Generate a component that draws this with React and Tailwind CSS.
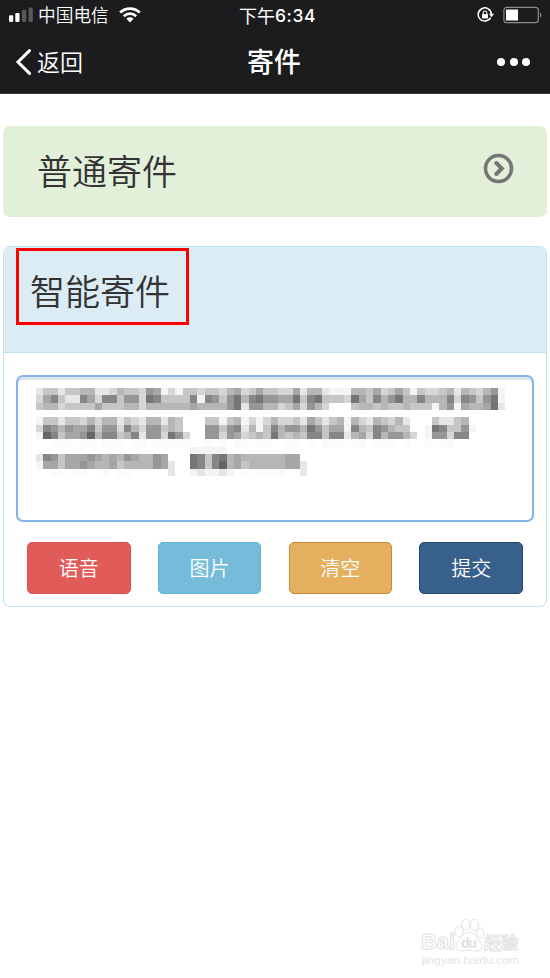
const CELL = 22 / 3;

// one character per block: hex grey level, g = barely visible, . = empty
const mosaic = [
  'ecceccbbeedbccd9afdfccdccdbadcaccddaebbefffbbcadcacfcddcbebcdb9f',
  'da8cee8ad88c99d78cccc8f89c97b8799aa7c87cccd7ac8b97bb8bbb8d89c97f',
  'cbbdccccacccbbdbbbbbbabbbb97e99bbdcad9bd...cbbcbccbcccfb9fabba7e',
  '',
  'fcceccdbdbbecdebbebc...ccfcbfdfdbddceacecbfbdebcdbe...ceecb',
  'd89b9aa8c99d8bd99cbc...99c98ebfc8b99b79caaf8bc89bcc..f78cc9f',
  'f68caa96b88cb8e99d79d..99d9adcbc7bcbc88c88ebad8b99bd.f99d88',
  '..ggg.gg.ggg.gg.ggggg..g.g.gg.gg..gg.g.ggg.gg.ggg.g..g.gg',
  '.....................fffff',
  'e89caaa9abab9abb9a...78c87babbbbbbaa',
  'faacaa9abbacbbbb9ae..78c86bacbbbbbaae',
  '..gg.gg..g.gg.....e..feffef.g.gggg..e',
];

function Mosaic() {
  return (
    <svg width="475" height="90" className="block" shapeRendering="crispEdges" aria-hidden="true">
      {mosaic.flatMap((row, y) =>
        [...row].map((c, x) => {
          if (c === '.') return null;
          const v = c === 'g' ? 251 : c === 'f' ? 244 : parseInt(c, 16) * 16 + 6;
          return <rect key={`${x}-${y}`} x={x * CELL} y={y * CELL} width={CELL} height={CELL} fill={`rgb(${v},${v},${v})`} />;
        })
      )}
    </svg>
  );
}

function StatusBar() {
  return (
    <div className="flex h-[30px] items-center text-white">
      <div className="flex flex-1 items-center pl-[9px]">
        <svg width="25" height="16" viewBox="0 0 25 16" fill="#fff">
          <rect x="0" y="8.3" width="4.2" height="6.7" rx="1.2" />
          <rect x="6.3" y="6" width="4.2" height="9" rx="1.2" />
          <rect x="13" y="3" width="4.2" height="12" rx="1.2" fill="#58585b" />
          <rect x="19.6" y="0.5" width="4.2" height="14.5" rx="1.2" fill="#58585b" />
        </svg>
        <span className="ml-[4px] text-[17.7px] font-[350] leading-none">中国电信</span>
        <svg className="ml-[10px]" width="22" height="16" viewBox="0 0 22 16" fill="none" stroke="#fff" strokeWidth="2.8">
          <path d="M1.2 5.6a14 14 0 0 1 19.6 0" />
          <path d="M4.8 9.2a9 9 0 0 1 12.4 0" />
          <path d="M11 15.4 7.4 11.8a5.2 5.2 0 0 1 7.2 0z" fill="#fff" stroke="none" />
        </svg>
      </div>
      <div className="flex items-center pl-[3px] text-[18px] leading-none">
        下午<span className="pt-px font-['Inter'] text-[17.5px] font-medium tracking-[0.6px]">6:34</span>
      </div>
      <div className="flex flex-1 items-center justify-end pr-[7px]">
        <svg width="18" height="16" viewBox="0 0 18 16" fill="none" stroke="#fff" strokeWidth="1.5">
          <path d="M13.6 10.7A6.6 6.6 0 1 1 14.4 7" />
          <path d="M12 6.8h5l-2.5 3.4z" fill="#fff" stroke="none" />
          <rect x="5" y="7" width="6" height="4.4" rx=".6" fill="#fff" stroke="none" />
          <path d="M6.2 7.4V5.8a1.8 1.8 0 0 1 3.6 0v1.6" strokeWidth="1.1" />
        </svg>
        <svg className="ml-[8px]" width="40" height="18" viewBox="0 0 40 18">
          <rect x=".9" y="1.3" width="34.4" height="15.4" rx="3" fill="none" stroke="#8a8a8c" strokeWidth="1.2" />
          <rect x="3" y="3.5" width="12" height="11" fill="#fff" />
          <path d="M37 6.5c1.8.5 1.8 4.5 0 5z" fill="#8a8a8c" />
        </svg>
      </div>
    </div>
  );
}

function NavBar() {
  return (
    <div className="flex h-[63px] items-center text-white">
      <div className="flex flex-1 items-center pl-[15px]">
        <svg width="17" height="26" viewBox="0 0 17 26" fill="none" stroke="#fff" strokeWidth="3" strokeLinecap="round">
          <path d="M14.5 1.6 3 13l11.5 11.4" />
        </svg>
        <span className="-mt-px ml-[5px] text-[23px] font-[350] leading-none">返回</span>
      </div>
      <h1 className="-mt-[3px] pl-[3px] text-[27px] font-medium leading-none">寄件</h1>
      <div className="flex flex-1 justify-end gap-[4.5px] pr-[20px]">
        <span className="size-[8px] rounded-full bg-white"></span>
        <span className="size-[8px] rounded-full bg-white"></span>
        <span className="size-[8px] rounded-full bg-white"></span>
      </div>
    </div>
  );
}

const buttons = [
  { label: '语音', color: 'bg-[#e15b59] border-[#dd504e]' },
  { label: '图片', color: 'bg-[#76bbda] border-[#5fb2d4]' },
  { label: '清空', color: 'bg-[#e5af60] border-[#c98d38]' },
  { label: '提交', color: 'bg-[#37608b] border-[#25476c]' },
];

export default function App() {
  return (
    <div className="relative h-[978px] w-[550px] overflow-hidden bg-white font-['Noto_Sans_CJK_SC',sans-serif] text-[#333]">
      <header className="h-[94px] border-b border-[#3b3b3d] bg-[#1c1c1f]">
        <StatusBar />
        <NavBar />
      </header>

      <main className="px-[3px] pt-8">
        <section className="flex h-[91px] items-center justify-between rounded-[7px] bg-[#e2efd9] pl-[34px] pr-[33px]">
          <h2 className="-mt-[5px] text-[35px] font-[350] leading-none">普通寄件</h2>
          <svg className="-mt-[6px]" width="31" height="31" viewBox="0 0 31 31" fill="none" stroke="#757575">
            <circle cx="15.5" cy="15.5" r="13" strokeWidth="3.6" />
            <path d="m13.3 10 5.5 5.5-5.5 5.5" strokeWidth="4" strokeLinecap="round" />
          </svg>
        </section>

        <section className="mt-[29px] h-[361px] rounded-[7px] border border-[#bce4ee]">
          <div className="relative h-[106px] rounded-t-[6px] border-b border-[#bce4ee] bg-[#dcecf5] pl-[26px] pt-[25px]">
            <h2 className="text-[35px] font-[350] leading-none">智能寄件</h2>
            <div className="absolute left-[12px] top-[1px] h-[77px] w-[173px] border-[3px] border-[#fe0000]"></div>
          </div>

          <div className="px-[12px] pt-[22px]">
            <div className="h-[147px] w-[518px] rounded-[7px] border-2 border-[#84b5e8] pl-[18px] pt-[11px] shadow-[inset_0_3px_1px_#dce3ea]">
              <Mosaic />
            </div>
            <div className="mt-[20px] flex gap-[27.2px] pl-[11px]">
              {buttons.map((b) => (
                <button key={b.label} className={`h-[52px] w-[103.6px] rounded-[5px] border text-[20px] font-[350] leading-none text-white ${b.color}`}>
                  {b.label}
                </button>
              ))}
            </div>
          </div>
        </section>
      </main>

      {/* Watermark */}
      <div className="absolute left-[420px] top-[917px]">
        <svg width="110" height="54" viewBox="0 0 110 54" fill="#fff" stroke="#e2e2e2" strokeWidth="1">
          <text x="1" y="32" fontFamily="Liberation Sans" fontWeight="bold" fontSize="22" textLength="34">Bai</text>
          <ellipse cx="39" cy="14.5" rx="4" ry="5.5" />
          <ellipse cx="46" cy="7.5" rx="4.2" ry="5.5" />
          <ellipse cx="54.5" cy="8" rx="4.2" ry="5.5" />
          <ellipse cx="60.5" cy="16" rx="3.8" ry="5" />
          <path d="M49 15c5 0 6 4 9 7 7 6 4 12-2 12-3 0-4-1-7-1s-4 1-7 1c-6 0-9-6-2-12 3-3 4-7 9-7z" />
          <text x="41" y="31" fontFamily="Liberation Sans" fontWeight="bold" fontSize="14" textLength="16" fill="#dedede" stroke="none">du</text>
          <text x="64" y="32" fontFamily="Noto Sans CJK SC" fontWeight="bold" fontSize="17" textLength="34">经验</text>
          <text x="2" y="47" fontFamily="Liberation Sans" fontSize="10.5" textLength="97" lengthAdjust="spacingAndGlyphs" fill="#e4e4e4" stroke="none">jingyan.baidu.com</text>
        </svg>
      </div>
    </div>
  );
}
